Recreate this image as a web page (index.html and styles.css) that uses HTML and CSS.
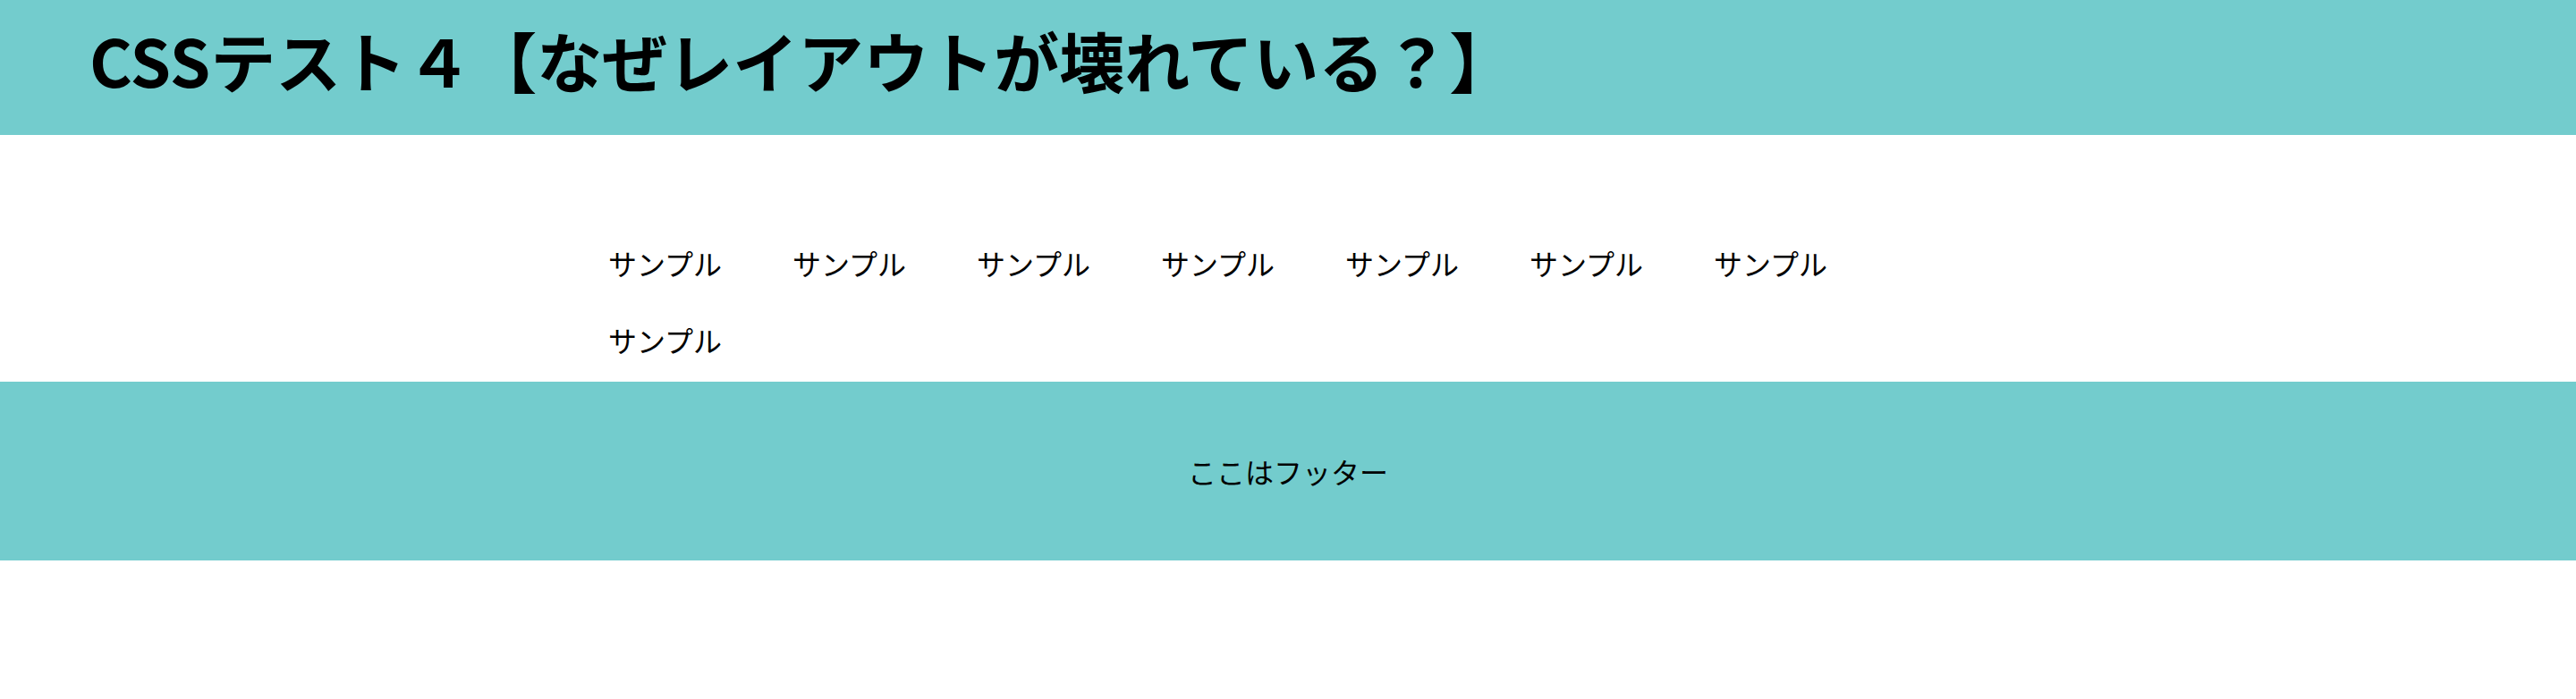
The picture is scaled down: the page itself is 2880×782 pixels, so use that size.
FILE: index.html
```html
<!DOCTYPE html>
<html lang="ja">
<head>
<meta charset="utf-8">
<title>CSSテスト４</title>
<link rel="stylesheet" href="styles.css">
</head>
<body>
<header class="site-header">
  <h1 class="site-title">CSSテスト４【なぜレイアウトが壊れている？】</h1>
</header>
<main class="content">
  <ul class="nav-list">
    <li class="nav-item">サンプル</li>
    <li class="nav-item">サンプル</li>
    <li class="nav-item">サンプル</li>
    <li class="nav-item">サンプル</li>
    <li class="nav-item">サンプル</li>
    <li class="nav-item">サンプル</li>
    <li class="nav-item">サンプル</li>
    <li class="nav-item">サンプル</li>
  </ul>
</main>
<footer class="site-footer">
  <p class="footer-text">ここはフッター</p>
</footer>
</body>
</html>
```

FILE: styles.css
```css
html, body {
  margin: 0;
  padding: 0;
  background: #ffffff;
}

body {
  font-family: "Noto Sans CJK JP", "Noto Sans", sans-serif;
  color: #000000;
}

.site-header {
  background: #73cccd;
  height: 151px;
  box-sizing: border-box;
  padding: 16px 0 0 100px;
}

.site-title {
  margin: 0;
  font-size: 73px;
  font-weight: 700;
  line-height: 100px;
  white-space: nowrap;
}

.content {
  padding: 100px 0 4px;
}

.nav-list {
  list-style: none;
  margin: 0 auto;
  padding: 0;
  width: 1520px;
  display: flex;
  flex-wrap: wrap;
}

.nav-item {
  font-size: 32px;
  line-height: 86px;
  width: 128px;
  margin-right: 78px;
  white-space: nowrap;
}

.site-footer {
  background: #73cccd;
  height: 200px;
  display: flex;
  align-items: center;
  justify-content: center;
}

.footer-text {
  margin: 0;
  font-size: 32px;
  line-height: 48px;
}
```
